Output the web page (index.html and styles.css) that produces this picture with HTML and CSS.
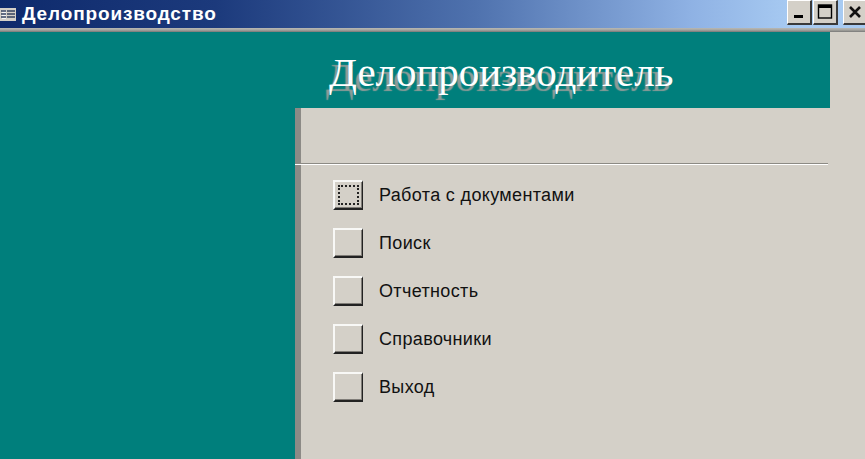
FILE: index.html
```html
<!DOCTYPE html>
<html lang="ru">
<head>
<meta charset="utf-8">
<title>Делопроизводство</title>
<link rel="stylesheet" href="styles.css">
</head>
<body>
<div class="window">
  <header class="titlebar">
    <svg class="app-icon" width="18" height="18" viewBox="0 0 18 18">
      <rect x="0" y="3" width="16" height="13" fill="#d4d0c8"/>
      <rect x="2" y="5" width="4" height="9" fill="#f4f4f4"/>
      <path d="M7 6h8M7 9h8M7 12h8M1 6h5M1 9h5M1 12h5" stroke="#33415f" stroke-width="1.4"/>
    </svg>
    <span class="title-text">Делопроизводство</span>
    <div class="controls">
      <div class="ctl">
        <svg width="14" height="14" viewBox="0 0 14 14"><rect x="2" y="10" width="9" height="3" fill="#000"/></svg>
      </div>
      <div class="ctl">
        <svg width="16" height="16" viewBox="0 0 16 16"><rect x="1.5" y="1" width="13" height="13" fill="none" stroke="#000" stroke-width="1.4"/><rect x="1" y="1" width="14" height="3" fill="#000"/></svg>
      </div>
      <div class="ctl ctl-close">
        <svg width="14" height="14" viewBox="0 0 14 14"><path d="M2 2l10 10M12 2L2 12" stroke="#111" stroke-width="2.6"/></svg>
      </div>
    </div>
  </header>
  <div class="separator"></div>
  <main class="client">
    <div class="side"></div>
    <section class="form">
      <div class="form-header">
        <h1 class="heading">Делопроизводитель</h1>
      </div>
      <div class="form-body">
        <div class="spacer"></div>
        <div class="rule"></div>
        <ul class="menu">
          <li class="item"><span class="btn btn-focus"><span class="focus-ring"></span></span><span class="label">Работа с документами</span></li>
          <li class="item"><span class="btn"></span><span class="label">Поиск</span></li>
          <li class="item"><span class="btn"></span><span class="label">Отчетность</span></li>
          <li class="item"><span class="btn"></span><span class="label">Справочники</span></li>
          <li class="item"><span class="btn"></span><span class="label">Выход</span></li>
        </ul>
      </div>
    </section>
  </main>
</div>
</body>
</html>
```
FILE: styles.css
```css
* { box-sizing: border-box; }
html, body { margin: 0; padding: 0; }
body { width: 865px; height: 459px; overflow: hidden; background: #d4d0c8; font-family: "Liberation Sans", Arial, sans-serif; }
.window { display: flex; flex-direction: column; height: 459px; }
.titlebar {
  height: 28px; flex: none; display: flex; align-items: center;
  background: linear-gradient(90deg, #0e2a6c 0%, #1c3a7c 25%, #4f72ae 55%, #8fb2e4 80%, #a8cbf2 92%, #a8cbf2 100%);
}
.app-icon { flex: none; margin: 0 4px 0 0; }
.title-text { color: #fff; font-weight: 700; font-size: 19px; letter-spacing: 0.85px; flex: 1; }
.controls { display: flex; align-items: flex-start; height: 25px; margin-top: -3px; gap: 1px; }
.ctl {
  width: 25px; height: 25px; display: flex; align-items: center; justify-content: center;
  background: #d4d0c8; border-right: 2px solid #3a3a3a; border-bottom: 2px solid #3a3a3a;
  border-top: 1px solid #fff; border-left: 1px solid #fff;
}
.ctl-close { margin-left: 4px; margin-right: -3px; }
.separator { height: 4px; flex: none; background: linear-gradient(#b8b8b4, #a5a5a0 50%, #777); }
.client { flex: 1; display: flex; min-height: 0; background: #d4d0c8; }
.side { width: 295px; flex: none; background: #007f7c; }
.form { flex: 1; display: flex; flex-direction: column; }
.form-header { height: 76px; flex: none; width: 535px; background: #007f7c; padding-left: 34px; }
.heading {
  margin: 0; padding-top: 17px; font: 400 41px/46px "Liberation Serif", "Times New Roman", serif;
  letter-spacing: -0.05px; color: #fff; text-shadow: -3px 5px 1px #8f9c98; white-space: nowrap;
}
.form-body { flex: 1; border-left: 6px solid #8c8a86; display: flex; flex-direction: column; }
.spacer { height: 55px; flex: none; }
.rule { height: 2px; flex: none; width: 533px; margin-left: -6px; background: linear-gradient(#8c8a84 50%, #fff 50%); }
.menu { list-style: none; margin: 0; padding: 15px 0 0 32px; display: flex; flex-direction: column; gap: 18px; }
.item { display: flex; align-items: center; gap: 16px; height: 30px; }
.btn {
  width: 30px; height: 30px; flex: none; display: flex; padding: 3px; background: #d4d0c8;
  border-style: solid; border-width: 2px 1px 2px 2px; border-color: #f8f8f6 #222 #222 #f8f8f6;
  box-shadow: inset -1px -1px 0 #807d78;
}
.focus-ring { flex: 1; border: 2px dotted #222; }
.label { font-size: 18px; line-height: 22px; letter-spacing: 0.35px; color: #111; }
```
